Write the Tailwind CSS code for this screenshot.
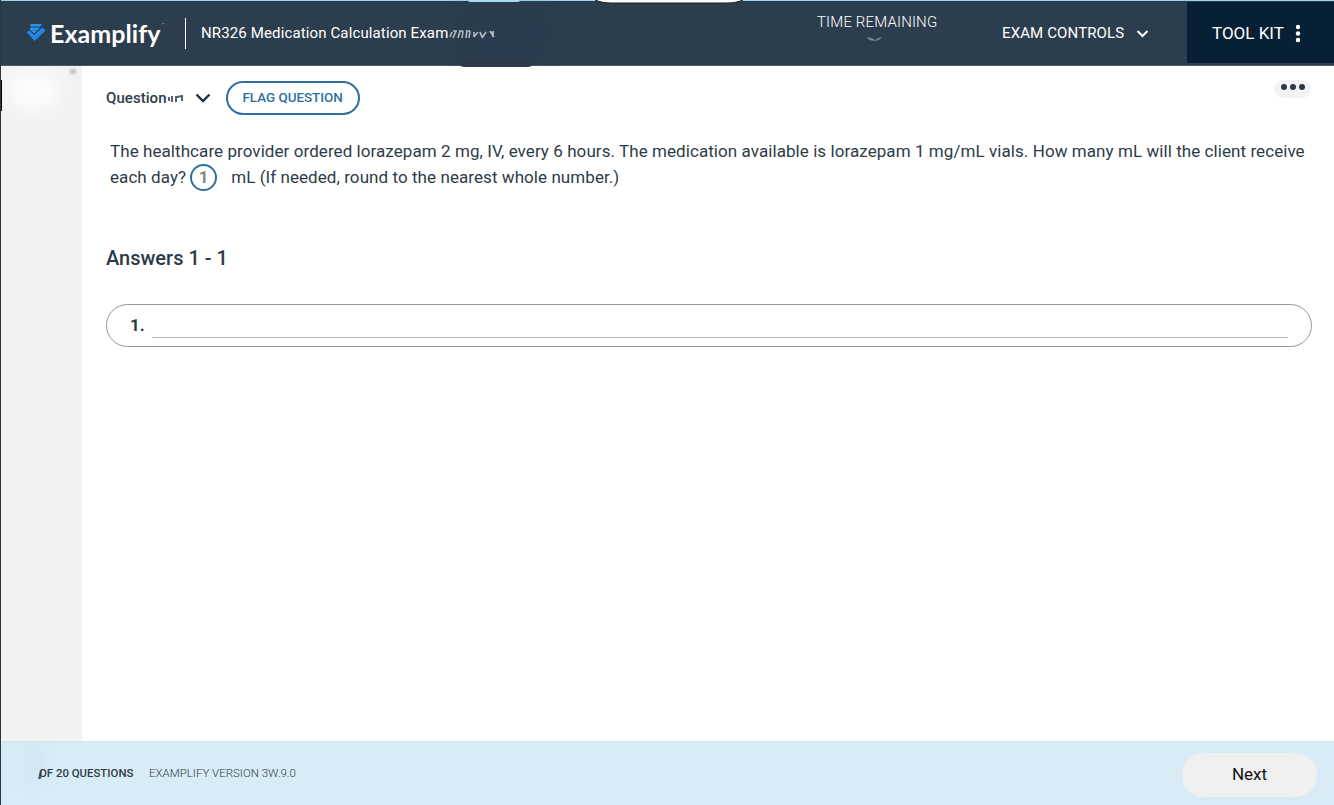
<!DOCTYPE html>
<html lang="en">
<head>
<meta charset="utf-8">
<title>Examplify</title>
<script src="https://cdn.jsdelivr.net/npm/@tailwindcss/browser@4"></script>
</head>
<body class="relative flex h-[805px] w-[1334px] flex-col overflow-hidden border-l border-[#30343b] bg-white font-[Roboto,sans-serif] text-[#2d3b48]">
  <header class="relative flex h-[66px] shrink-0 border-t border-b border-t-[#9bd3e4] border-b-[#4c5766] bg-[#2c3e4e] text-white">
    <div class="absolute left-[457px] top-[8px] h-[48px] w-[90px] bg-[#283a4b]/50 blur-[6px]"></div>
    <div class="absolute left-[457px] top-[60px] h-[6px] w-[76px] rounded-b-[10px] bg-[#2b394a]"></div>
    <div class="absolute left-[467px] -top-px h-[2px] w-[52px] rounded-b-full bg-[#a5dcec]"></div>
    <svg class="absolute left-[594px] -top-px h-[4px] w-[148px]" viewBox="0 0 148 4"><path d="M0 0C5 2 10 3 16 3H132c6 0 11-1 16-3z" fill="#fff"/><path d="M0 0C5 2 10 3 16 3H132c6 0 11-1 16-3" fill="none" stroke="#18222b"/></svg>
    <div class="relative flex h-[64px] w-[184px] items-center pl-[25px]">
      <svg class="h-[20px] w-[20px] shrink-0" viewBox="0 0 20 20">
        <path d="M4.500 1h11.500l-1.500 2.500h-10z" fill="#2593f0"/>
        <path d="M4 4.600h10l-2.200 2.700H4z" fill="#2593f0"/>
        <path d="M.5 9l3-1.500 4.500 4.500L16.500 4.500 19.500 7.500 8.500 18z" fill="#1e88e8"/>
        <path d="M4.500 7.500h6.500L8.200 10.200z" fill="#2c9cf5"/>
      </svg>
      <span class="ml-[4px] mt-px whitespace-nowrap font-[Lato,sans-serif] text-[25px] font-bold leading-none tracking-[0.05px]">Examplify</span>
      <span class="absolute left-[161px] top-[22px] text-[4px] leading-none text-white/60">™</span>
    </div>
    <div class="mt-[17px] h-[31px] w-px bg-white"></div>
    <div class="relative ml-[15px] h-[64px] w-[616px] whitespace-nowrap text-[15px] leading-[64px] tracking-[0.13px]">NR326 Medication Calculation Exam
      <svg class="absolute left-[248px] top-[25px] h-[16px] w-[48px] blur-[.5px]" viewBox="0 0 48 16" fill="none" stroke="#d0d8dd">
        <path d="M3 6l-2 5M7 5l-3 7M4 5h4M11 5l-2 7M10 5h4M14 5l-1 7M18 5l-1 7M17 5h4M21 5l-1 7M25 6v5M29 6l-4 5" stroke-width="1.600" opacity=".8"/>
        <path d="M31 6l2 5M37 6l-4 6M41 5l4 6M44 5v6" stroke-width="1.800" opacity=".8"/>
      </svg>
    </div>
    <div class="relative h-[42px] w-[185px] whitespace-nowrap text-[15px] font-light leading-[42px] tracking-[0.15px]">TIME REMAINING
      <svg class="absolute left-[49px] top-[34px] h-[7px] w-[18px] blur-[.3px]" viewBox="0 0 18 7"><path d="M1 2l5 1 3 2 3-2 4-1-3 3-5 1-5-1z" fill="#71838f"/></svg>
    </div>
    <div class="flex h-[65px] w-[185px] items-center whitespace-nowrap text-[15px] tracking-[0.13px]">EXAM CONTROLS
      <svg class="ml-[12px] h-[8px] w-[13px]" viewBox="0 0 13 8" fill="none" stroke="white" stroke-width="2"><path d="M1.500 1l5 5 5-5"/></svg>
    </div>
    <div class="mt-[1px] flex h-[61px] flex-1 items-center whitespace-nowrap bg-[#082035] pl-[25px] pt-[2px] text-[17px]">TOOL KIT
      <svg class="ml-[11px] h-[20px] w-[6px]" viewBox="0 0 6 20" fill="white"><circle cx="3" cy="3" r="2.200"/><circle cx="3" cy="9.500" r="2.200"/><circle cx="3" cy="16" r="2.200"/></svg>
    </div>
  </header>

  <main class="flex h-[675px] shrink-0">
    <aside class="relative w-[81px] overflow-hidden bg-[#f2f2f2]">
      <div class="absolute left-[5px] top-[5px] h-[38px] w-[55px] rounded-full bg-white/80 blur-[10px]"></div>
      <div class="absolute left-[69px] top-[3px] h-[5px] w-[6px] bg-[#c3c5c8] blur-[1px]"></div>
      <div class="absolute left-0 top-[14px] h-[31px] w-px bg-black"></div>
    </aside>
    <section class="min-w-0 flex-1 pl-[24px]">
      <div class="flex h-[64px] items-center">
        <span class="text-[15px] font-medium tracking-[0.06px]">Question</span>
        <svg class="h-[10px] w-[17px] blur-[.3px]" viewBox="0 0 17 10" fill="none" stroke="#54606b"><path d="M2 4v4M5 3v6M4 4h2M9 3v6M10 4l5-1v5" stroke-width="2"/></svg>
        <svg class="ml-[11px] h-[10px] w-[16px]" viewBox="0 0 16 10" fill="none" stroke="#23303b" stroke-width="2.400"><path d="M1.500 1.500L8 8l6.500-6.500"/></svg>
        <button class="ml-[15px] h-[34px] w-[134px] whitespace-nowrap rounded-full border-2 border-[#2f6f9f] text-[13.4px] font-medium text-[#2f6f9f]">FLAG QUESTION</button>
        <div class="ml-auto mr-[23px] -mt-[19px] flex h-[18px] w-[37px] items-center justify-center gap-[3px] rounded-full bg-[#f3f3f4] pb-[3px]">
          <i class="size-[6px] rounded-full bg-[#293a49]"></i><i class="size-[6px] rounded-full bg-[#293a49]"></i><i class="size-[6px] rounded-full bg-[#293a49]"></i>
        </div>
      </div>
      <div class="ml-[4px] mt-[8px] whitespace-nowrap text-[17px] leading-[26px] tracking-[0.069px]">
        <p>The healthcare provider ordered lorazepam 2 mg, IV, every 6 hours. The medication available is lorazepam 1 mg/mL vials. How many mL will the client receive</p>
        <p class="flex h-[26px] items-center"><span>each day?</span><span class="ml-[4px] flex size-[27px] items-center justify-center rounded-full border-2 border-[#2f6f9f] font-bold text-[#858585]">1</span><span class="ml-[14px]">mL (If needed, round to the nearest whole number.)</span></p>
      </div>
      <h2 class="mt-[54px] text-[20px] font-medium leading-[28px]">Answers 1 - 1</h2>
      <div class="mt-[32px] flex h-[43px] w-[1206px] items-center rounded-full border border-[#969696] px-[23px]">
        <span class="mt-px w-[22px] text-[17px] font-bold">1.</span>
        <div class="mt-[24px] h-px flex-1 bg-[#bdbdbd]"></div>
      </div>
    </section>
  </main>

  <footer class="relative flex h-[64px] shrink-0 items-center border-t border-[#d2e5ed] bg-[#d9ecf6]">
    <div class="absolute left-[20px] top-[3px] h-[38px] w-[24px] bg-[#cedfea]/30 blur-[4px]"></div>
    <svg class="absolute left-[35px] top-[26px] h-[12px] w-[8px] blur-[.3px]" viewBox="0 0 8 12"><path d="M6 1L5 11H2l1-5z" fill="#53616b"/></svg>
    <span class="relative ml-[38px] mt-px w-[110px] whitespace-nowrap text-[11.4px] font-medium">OF 20 QUESTIONS</span>
    <span class="mt-px whitespace-nowrap text-[11.5px] font-light">EXAMPLIFY VERSION 3W.9.0</span>
    <button class="ml-auto mr-[17px] mt-[2px] h-[44px] w-[135px] rounded-full bg-[#f0f0f0] text-[17px] text-[#101214]">Next</button>
  </footer>
</body>
</html>
